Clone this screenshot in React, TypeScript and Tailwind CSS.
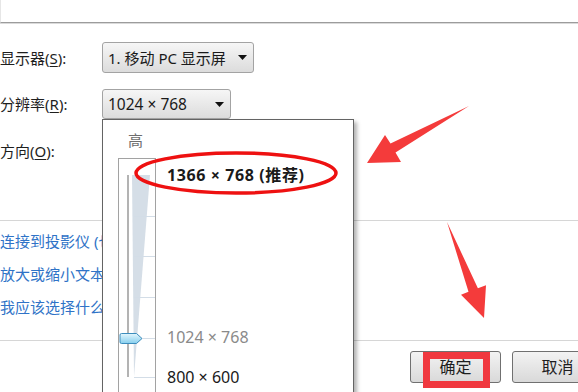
import { FC, ReactNode } from "react";

const Caret: FC = () => (
  <svg width="9" height="5" viewBox="0 0 9 5">
    <path d="M0 0h9L4.5 5z" fill="#111" />
  </svg>
);

const Label: FC<{ text: string; hot: string }> = ({ text, hot }) => (
  <div className="w-[102px] shrink-0 text-[#1e1e1e]">
    {text}(<span className="underline underline-offset-2">{hot}</span>):
  </div>
);

const Row: FC<{ children: ReactNode; className: string }> = ({ children, className }) => (
  <div className={className}>{children}</div>
);

const Slider: FC = () => (
  <svg width="40" height="240" viewBox="0 0 40 240" className="shrink-0">
    <defs>
      <linearGradient id="thumb" x1="0" y1="0" x2="0" y2="1">
        <stop offset="0" stopColor="#e4f6fd" />
        <stop offset="1" stopColor="#86cfee" />
      </linearGradient>
    </defs>
    <rect x="0.5" y="0.5" width="37" height="260" fill="none" stroke="#444" strokeDasharray="1 1" />
    <polygon points="14,17 32,17 16,219" fill="#d5dee7" />
    {[58, 98, 139, 180, 219].map((y) => (
      <line key={y} x1="16" x2="37" y1={y + 0.5} y2={y + 0.5} stroke="#d3dde7" />
    ))}
    <line x1="10" x2="10" y1="17" y2="219" stroke="#9a9a9a" strokeWidth="1.5" />
    <path
      d="M3.5 175.5h15l5.5 5-5.5 5h-15a1.5 1.5 0 0 1-1.5-1.5v-7a1.5 1.5 0 0 1 1.5-1.5z"
      fill="url(#thumb)"
      stroke="#3c8dbd"
    />
  </svg>
);

const Button: FC<{ text: string }> = ({ text }) => (
  <div className="w-[91px] h-[32px] shrink-0 flex items-center justify-center rounded-[3px] border border-[#707070] bg-linear-to-b from-[#f3f3f3] to-[#d9d9d9] text-[16px] text-[#1e1e1e]">
    {text}
  </div>
);

const App: FC = () => {
  return (
    <div className="relative w-[578px] h-[392px] overflow-hidden bg-white font-['Noto_Sans','Noto_Sans_CJK_SC',sans-serif] text-[15px] leading-[18px]">
      {/* Top box */}
      <div className="h-[23px] border-l border-l-[#e6e6e6] border-b border-b-[#9c9c9c]"></div>
      <div className="h-px bg-[#dadada]"></div>

      {/* Form */}
      <Row className="flex items-center h-[31px] mt-[18px]">
        <Label text="显示器" hot="S" />
        <div className="w-[152px] h-full flex items-center justify-between pl-[5px] pr-[6px] rounded-[3px] border border-[#a3a3a3] bg-linear-to-b from-[#f6f6f6] to-[#dcdcdc] text-[#1a1a1a]">
          1. 移动 PC 显示屏
          <Caret />
        </div>
      </Row>
      <Row className="flex items-center h-[30px] mt-[16px]">
        <Label text="分辨率" hot="R" />
        <div className="w-[129px] h-full flex items-center justify-between pl-[5px] pr-[6px] rounded-[3px] border border-[#a3a3a3] bg-linear-to-b from-[#f6f6f6] to-[#dcdcdc] text-[15.5px] text-[#1a1a1a]">
          1024 × 768
          <Caret />
        </div>
      </Row>
      <Row className="flex items-center h-[30px] mt-[17px]">
        <Label text="方向" hot="O" />
      </Row>

      <div className="h-px bg-[#d6d6d6] mt-[54px]"></div>

      {/* Links */}
      <div className="pt-[4px] leading-[33px] text-[#2f73c7] whitespace-nowrap">
        <div>连接到投影仪 (也可以按住 ⊞ 键并点击 P)</div>
        <div>放大或缩小文本和其他项目</div>
        <div>我应该选择什么显示器设置?</div>
      </div>

      <div className="h-px bg-[#d6d6d6] mt-[16px]"></div>

      {/* Buttons */}
      <div className="flex gap-[11px] pl-[410px] mt-[10px]">
        <Button text="确定" />
        <Button text="取消" />
      </div>

      {/* Resolution dropdown popup */}
      <div className="absolute left-[102px] top-[119px] w-[252px] h-[290px] bg-white border border-[#646464] shadow-[3px_3px_4px_rgba(0,0,0,0.3)]">
        <div className="pl-[25px] pt-[11px] text-[#6d6d6d]">高</div>
        <div className="flex items-start mt-[9px] ml-[15px]">
          <Slider />
          <div className="flex flex-col ml-[9px] -mt-[3px] whitespace-nowrap text-[16px]">
            <div className="h-[40.4px] flex items-center font-bold tracking-[0.6px] text-[#1a1a1a]">1366 × 768 (推荐)</div>
            <div className="h-[40.4px]"></div>
            <div className="h-[40.4px]"></div>
            <div className="h-[40.4px]"></div>
            <div className="h-[40.4px] flex items-center text-[#8a8a8a]">1024 × 768</div>
            <div className="h-[40.4px] flex items-center text-[#1a1a1a]">800 × 600</div>
          </div>
        </div>
      </div>

      {/* Red annotations */}
      <svg className="absolute inset-0 pointer-events-none" width="578" height="392" viewBox="0 0 578 392">
        <ellipse cx="236" cy="173" rx="100" ry="20" fill="none" stroke="#ee1111" strokeWidth="3.5" />
        <polygon points="367,163 385,135 390.5,143.5 469,106 395.5,152.5 401,162" fill="#f43b3b" />
        <polygon points="484,318 461,294.7 468.5,291.8 447,222 477.9,288.2 486,285.3" fill="#f43b3b" />
        <rect x="426.5" y="355.5" width="60" height="29" fill="none" stroke="#f0383f" strokeWidth="7" />
      </svg>
    </div>
  );
};

export default App;
